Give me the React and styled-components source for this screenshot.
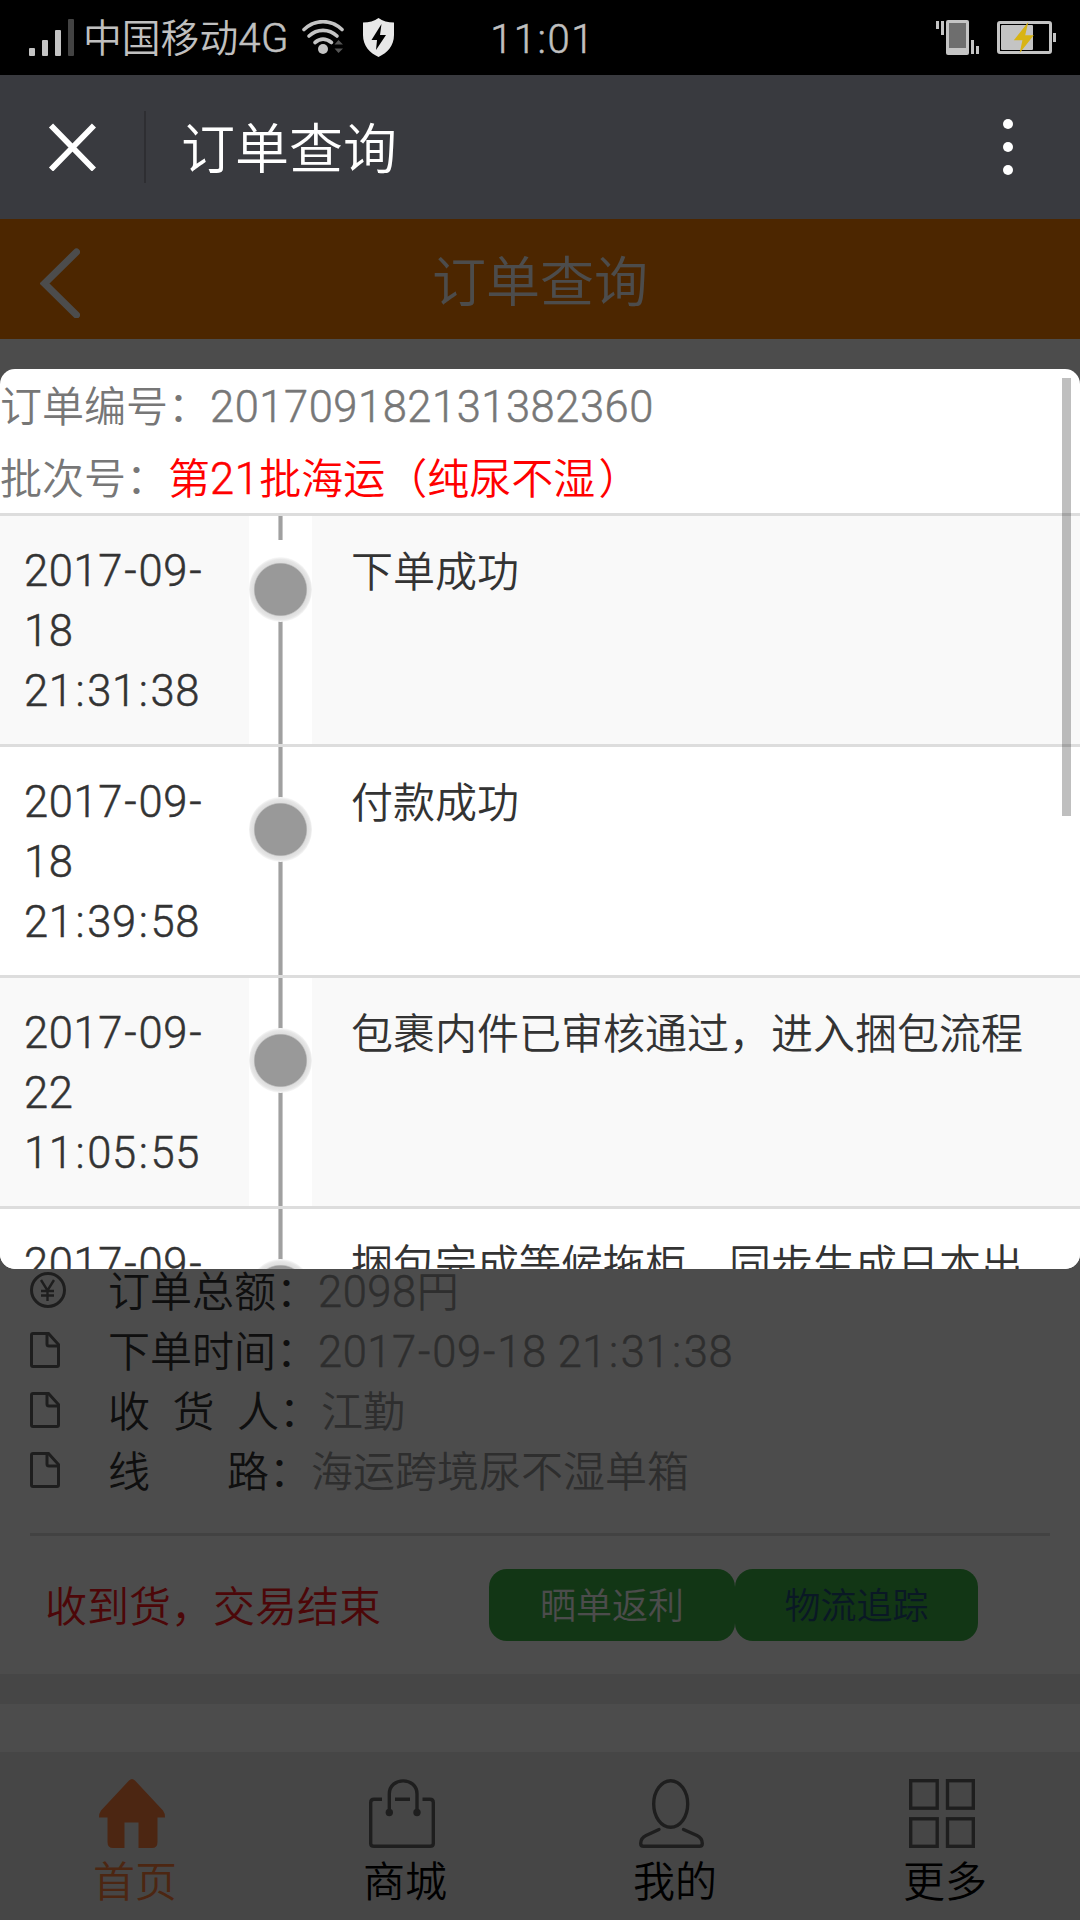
import React from "react";
import styled, { createGlobalStyle } from "styled-components";

const tracks = [
  { date: "2017-09-18", time: "21:31:38", text: "下单成功" },
  { date: "2017-09-18", time: "21:39:58", text: "付款成功" },
  { date: "2017-09-22", time: "11:05:55", text: "包裹内件已审核通过，进入捆包流程" },
  { date: "2017-09-", time: "", text: "捆包完成等候拖柜，同步生成日本出" },
];

// dashes and colons get a little more room than the digits
const spaced = (value) =>
  value.split(/([-:])/).map((part, index) =>
    part === "-" || part === ":" ? (
      <Separator key={index} $colon={part === ":"}>
        {part}
      </Separator>
    ) : (
      part
    )
  );

const App = () => {
  return (
    <Screen>
      <GlobalStyle />
      <StatusBar>
        <StatusLeft>
          <SignalIcon />
          <Carrier>
            中国移动<Num>4G</Num>
          </Carrier>
          <WifiIcon />
          <ShieldIcon />
        </StatusLeft>
        <Clock>11:01</Clock>
        <StatusRight>
          <VibrateIcon />
          <BatteryIcon />
        </StatusRight>
      </StatusBar>

      <WebHeader>
        <CloseIcon />
        <Divider />
        <WebTitle>订单查询</WebTitle>
        <MoreIcon />
      </WebHeader>

      <Page>
        <PageHeader>
          <BackIcon />
          <PageTitle>订单查询</PageTitle>
        </PageHeader>

        <OrderCard>
          <InfoRow>
            <IconSlot>
              <YenIcon />
            </IconSlot>
            <Label>订单总额</Label>
            <Colon>：</Colon>
            <Value>
              <Num>2098</Num>円
            </Value>
          </InfoRow>
          <InfoRow>
            <IconSlot>
              <FileIcon />
            </IconSlot>
            <Label>下单时间</Label>
            <Colon>：</Colon>
            <Value>
              <Num>{spaced("2017-09-18 21:31:38")}</Num>
            </Value>
          </InfoRow>
          <InfoRow>
            <IconSlot>
              <FileIcon />
            </IconSlot>
            <Label $gap={22.5}>
              <span>收</span>
              <span>货</span>
              <span>人</span>
            </Label>
            <Colon>：</Colon>
            <Value>江勤</Value>
          </InfoRow>
          <InfoRow>
            <IconSlot>
              <FileIcon />
            </IconSlot>
            <Label $gap={77}>
              <span>线</span>
              <span>路</span>
            </Label>
            <Colon>：</Colon>
            <Value>海运跨境尿不湿单箱</Value>
          </InfoRow>
          <CardFooter>
            <OrderState>收到货，交易结束</OrderState>
            <Button $width={246} $color="#fff">
              晒单返利
            </Button>
            <Button $width={243} $color="#23527c">
              物流追踪
            </Button>
          </CardFooter>
        </OrderCard>
        <NextCard />

        <TabBar>
          <Tab $active>
            <HomeIcon />
            首页
          </Tab>
          <Tab>
            <BagIcon />
            商城
          </Tab>
          <Tab>
            <UserIcon />
            我的
          </Tab>
          <Tab>
            <GridIcon />
            更多
          </Tab>
        </TabBar>

        <Overlay>
          <Modal>
            <ModalLine>
              订单编号：<Num>201709182131382360</Num>
            </ModalLine>
            <ModalLine>
              批次号：
              <Batch>
                第<Num>21</Num>批海运（纯尿不湿<ClosingParen>）</ClosingParen>
              </Batch>
            </ModalLine>
            {tracks.map((item, index) => (
              <TrackRow key={index} $striped={index % 2 === 0}>
                <TrackTime>
                  {spaced(item.date)} {spaced(item.time)}
                </TrackTime>
                <Axis $first={index === 0}>
                  <Dot />
                </Axis>
                <TrackText>{item.text}</TrackText>
              </TrackRow>
            ))}
            <ScrollThumb />
          </Modal>
        </Overlay>
      </Page>
    </Screen>
  );
};

export default App;

const SignalIcon = () => (
  <svg width="46" height="38" viewBox="0 0 46 38" fill="#c4c4c4">
    <rect x="0" y="29" width="6" height="8" rx="1" />
    <rect x="13" y="21" width="6" height="16" rx="1" />
    <rect x="26" y="11" width="6" height="26" rx="1" />
    <rect x="39" y="0" width="6" height="37" rx="1" fill="#434343" />
  </svg>
);

const WifiIcon = () => (
  <svg width="43" height="36" viewBox="0 0 43 36" fill="none">
    <g stroke="#c4c4c4" strokeWidth="3.6" strokeLinecap="round">
      <path d="M2 9.5C13 -1 29 -1 40 9.5" />
      <path d="M7 16C15 8.5 27 8.5 35 16" />
      <path d="M13 22.5C18 18.3 24 18.3 29.500 22.5" />
    </g>
    <circle cx="21" cy="29" r="5" fill="#c4c4c4" />
    <path d="M32.500 24.500L36.500 20L41 24.500ZM32.500 28.500L36.500 33L41 28.500Z" fill="#555" />
  </svg>
);

const ShieldIcon = () => (
  <svg width="31" height="39" viewBox="0 0 31 39">
    <path
      d="M15.500 0C11.500 3 6 4.500 0 4.500V17C0 28 7 35 15.500 39C24 35 31 28 31 17V4.500C25 4.500 19.500 3 15.500 0Z"
      fill="#e8e8e8"
    />
    <path d="M18.500 6L8.500 22H14L13 32L23 17H17Z" fill="#000" />
  </svg>
);

const VibrateIcon = () => (
  <svg width="43" height="36" viewBox="0 0 43 36" fill="#c4c4c4">
    <rect x="0" y="1" width="3" height="8" />
    <rect x="5" y="1" width="3" height="14" />
    <rect x="10" y="0" width="23" height="35" rx="2" />
    <rect x="13" y="3" width="17" height="25" fill="#6e6e6e" />
    <rect x="35" y="20" width="3" height="14" />
    <rect x="40" y="26" width="3" height="8" />
  </svg>
);

const BatteryIcon = () => (
  <svg width="59" height="34" viewBox="0 0 59 34">
    <rect x="1.500" y="1.500" width="52" height="30" rx="1.500" fill="none" stroke="#c4c4c4" strokeWidth="3" />
    <rect x="4" y="4" width="32" height="25" rx="1" fill="#c4c4c4" />
    <rect x="56" y="12" width="3" height="9" fill="#c4c4c4" />
    <path d="M31.300 1L16.800 19.300H25.400L22.700 32L36.800 14.300H28.200Z" fill="#d8b414" />
  </svg>
);

const CloseIcon = () => (
  <svg width="48" height="48" viewBox="0 0 48 48" stroke="#fff" strokeWidth="5.800">
    <path d="M3 2.500L46 46.500M46 2.500L3 46.500" />
  </svg>
);

const MoreIcon = () => (
  <svg width="10" height="56" viewBox="0 0 10 56" fill="#fff">
    <circle cx="5" cy="5" r="5" />
    <circle cx="5" cy="28" r="5" />
    <circle cx="5" cy="51" r="5" />
  </svg>
);

const BackIcon = () => (
  <svg width="40" height="70" viewBox="0 0 40 70" fill="none" stroke="#fff" strokeWidth="7">
    <path d="M36.500 4L4.500 35.500L36.500 67" strokeLinecap="round" />
  </svg>
);

const YenIcon = () => (
  <svg width="36" height="36" viewBox="0 0 36 36" fill="none" stroke="#666">
    <circle cx="18" cy="18" r="16.500" strokeWidth="3" />
    <path d="M11 8L17.500 18.500L24 8M17.500 18.500V29M11 19H24M11 23.500H24" strokeWidth="2.400" />
  </svg>
);

const FileIcon = () => (
  <svg width="30" height="36" viewBox="0 0 30 36" fill="none" stroke="#666" strokeWidth="3">
    <path d="M3 1.500H18.500L28.500 12.500V33Q28.500 34.500 27 34.500H3Q1.500 34.500 1.500 33V3Q1.500 1.500 3 1.500Z" />
    <path d="M17 2V12Q17 14 19 14H28" />
  </svg>
);

const HomeIcon = () => (
  <svg width="66" height="69" viewBox="0 0 66 69" fill="#ff7f3f">
    <path d="M30 1.500Q33 -1.500 36 1.500L64 31.500Q66 34 66 38.500H58.500V63Q58.500 69 53 69H39.500V43.500H25.500V69H14Q8.500 69 8.500 63V38.500H0Q0 34 2 31.500Z" />
  </svg>
);

const BagIcon = () => (
  <svg width="66" height="69" viewBox="0 0 66 69" fill="none" stroke="#666" strokeWidth="3.400">
    <path d="M13 20.300H5Q1.700 20.300 1.700 23.500V64.500Q1.700 67.300 5 67.300H61Q64.300 67.300 64.300 64.500V23.500Q64.300 20.300 61 20.300H53.500M26 20.300H41" />
    <path d="M20.300 33V15C20.300 -2.500 48 -2.500 48 15V33" />
    <circle cx="20.300" cy="33.500" r="3.700" fill="#666" stroke="none" />
    <circle cx="48" cy="33.500" r="3.700" fill="#666" stroke="none" />
  </svg>
);

const UserIcon = () => (
  <svg width="66" height="69" viewBox="0 0 66 69" fill="none" stroke="#666" strokeWidth="3.400">
    <ellipse cx="31.700" cy="25" rx="17" ry="23.300" />
    <path
      d="M20 50.500L7 56.500Q1.700 59 1.700 64.500Q1.700 67.300 4.500 67.300H60.500Q63.300 67.300 63.300 64.500Q63.300 59 58 56.500L44.500 50.500"
      strokeLinecap="round"
    />
  </svg>
);

const GridIcon = () => (
  <svg width="66" height="69" viewBox="0 0 66 69" fill="none" stroke="#666" strokeWidth="3.400">
    <rect x="1.700" y="1.700" width="26.500" height="27.500" />
    <rect x="38.500" y="1.700" width="25.800" height="27.500" />
    <rect x="1.700" y="39.800" width="26.500" height="27.500" />
    <rect x="38.500" y="39.800" width="25.800" height="27.500" />
  </svg>
);

const GlobalStyle = createGlobalStyle`
  * {
    box-sizing: border-box;
  }

  body {
    margin: 0;
    font-family: "Noto Sans CJK SC", sans-serif;
    font-weight: 350;
  }

  svg {
    display: block;
    flex-shrink: 0;
  }
`;

const Screen = styled.div`
  display: flex;
  flex-direction: column;
  width: 1080px;
  height: 1920px;
  overflow: hidden;
  background-color: #fff;
`;

const Num = styled.span`
  font-family: Roboto, sans-serif;
  font-size: 1.035em;
  letter-spacing: 0.55px;
  line-height: 1;
  -webkit-text-stroke: 0.5px;
`;

const Separator = styled.span`
  padding: 0 ${({ $colon }) => ($colon ? 2 : 1.3)}px;
`;

const StatusBar = styled.div`
  display: grid;
  grid-template-columns: 1fr auto 1fr;
  align-items: center;
  height: 75px;
  padding: 0 24px 0 29px;
  background-color: #000;
  color: #c0c0c0;
`;

const StatusLeft = styled.div`
  display: flex;
  align-items: center;
`;

const Carrier = styled.div`
  width: 209px;
  margin: 0 10px 0 8px;
  padding-bottom: 5px;
  font-size: 38.8px;
  line-height: 69px;
  white-space: nowrap;

  & + svg {
    margin-right: 18px;
  }
`;

const Clock = styled.div`
  padding-top: 3px;
  font-family: Roboto, sans-serif;
  font-size: 40px;
  letter-spacing: 1.5px;
  -webkit-text-stroke: 0.5px;
`;

const StatusRight = styled.div`
  display: flex;
  align-items: center;
  justify-content: flex-end;
  gap: 18px;
`;

const WebHeader = styled.div`
  display: flex;
  align-items: center;
  height: 144px;
  padding: 0 67px 0 48px;
  background-color: #393a3f;
`;

const Divider = styled.div`
  width: 2px;
  height: 72px;
  margin: 0 35px 0 48px;
  background-color: #2e2e32;
`;

const WebTitle = styled.div`
  flex: 1;
  padding-bottom: 3px;
  color: #fff;
  font-size: 54px;
  line-height: 80px;
`;

const Page = styled.div`
  position: relative;
  display: flex;
  flex: 1;
  flex-direction: column;
  background-color: #ebebeb;
`;

const PageHeader = styled.div`
  display: grid;
  grid-template-columns: 40px 1fr 40px;
  align-items: center;
  height: 120px;
  padding: 8px 40px 0;
  background-color: #ff8000;
`;

const PageTitle = styled.div`
  margin-top: -8px;
  color: #fff;
  font-size: 54px;
  line-height: 80px;
  text-align: center;
`;

const OrderCard = styled.div`
  display: flex;
  flex-direction: column;
  justify-content: flex-end;
  height: 1335px;
  padding: 0 30px;
  background-color: #fff;
`;

const InfoRow = styled.div`
  display: flex;
  align-items: center;
  height: 60px;
  font-size: 42px;
  line-height: 58px;
`;

const IconSlot = styled.div`
  width: 78px;
`;

const Label = styled.div`
  display: flex;
  gap: ${({ $gap }) => $gap || 0}px;
  height: 60px;
  color: #333;
`;

const Colon = styled.div`
  height: 60px;
  color: #333;
`;

const Value = styled.div`
  height: 60px;
  color: #999;
`;

const CardFooter = styled.div`
  display: flex;
  align-items: center;
  height: 141px;
  margin-top: 33px;
  padding-left: 15px;
  border-top: 3px solid #ddd;
`;

const OrderState = styled.div`
  width: 444px;
  padding-bottom: 3px;
  color: #ff1a20;
  font-size: 42px;
`;

const Button = styled.div`
  width: ${({ $width }) => $width}px;
  height: 72px;
  border-radius: 18px;
  background-color: #3cb446;
  color: ${({ $color }) => $color};
  font-size: 36px;
  line-height: 69px;
  text-align: center;
`;

const NextCard = styled.div`
  height: 48px;
  margin-top: 30px;
  background-color: #fff;
`;

const TabBar = styled.div`
  display: grid;
  grid-template-columns: repeat(4, 1fr);
  height: 168px;
  background-color: #ebebeb;
`;

const Tab = styled.div`
  display: flex;
  flex-direction: column;
  align-items: center;
  padding-top: 27px;
  color: ${({ $active }) => ($active ? "#ff7f3f" : "#000")};
  font-size: 42px;
  line-height: 62px;

  svg {
    margin-right: 6px;
  }
`;

const Overlay = styled.div`
  position: absolute;
  inset: 0;
  padding-top: 150px;
  background-color: rgba(0, 0, 0, 0.7);
`;

const Modal = styled.div`
  position: relative;
  height: 900px;
  overflow: hidden;
  border-radius: 15px;
  background-color: #fff;
  color: #777;
  font-size: 42px;
`;

const ModalLine = styled.div`
  height: 72px;
  line-height: 70px;
`;

const Batch = styled.span`
  color: #f00;
`;

const ClosingParen = styled.span`
  margin-left: 3px;
`;

const TrackRow = styled.div`
  display: flex;
  height: 231px;
  border-top: 3px solid #ddd;
  background-color: ${({ $striped }) => ($striped ? "#f9f9f9" : "#fff")};
  color: #333;
  line-height: 60px;
`;

const TrackTime = styled.div`
  width: 249px;
  padding: 26px 40px 22px 24px;
  font-family: Roboto, sans-serif;
  font-size: 43.5px;
  letter-spacing: 0.6px;
  -webkit-text-stroke: 0.5px;
`;

const Axis = styled.div`
  display: flex;
  justify-content: center;
  width: 63px;
  padding-top: ${({ $first }) => ($first ? 41 : 50)}px;
  background: ${({ $first }) =>
      $first ? "linear-gradient(#fff, #fff) 0 24px / 63px 20px no-repeat," : ""}
    linear-gradient(90deg, #fff 29px, #c8c8c8 29px, #c8c8c8 30px, #a0a0a0 30px, #a0a0a0 33px, #c8c8c8 33px, #c8c8c8 34px, #fff 34px);
`;

const Dot = styled.div`
  width: 63px;
  height: 65px;
  border-radius: 50%;
  background: radial-gradient(circle, #999 25.5px, #dedede 27px, #e6e6e6 30px, #fff 33px);
`;

const TrackText = styled.div`
  flex: 1;
  padding: 23px 39px;
`;

const ScrollThumb = styled.div`
  position: absolute;
  top: 9px;
  right: 9px;
  width: 9px;
  height: 438px;
  background-color: rgba(0, 0, 0, 0.25);
`;
